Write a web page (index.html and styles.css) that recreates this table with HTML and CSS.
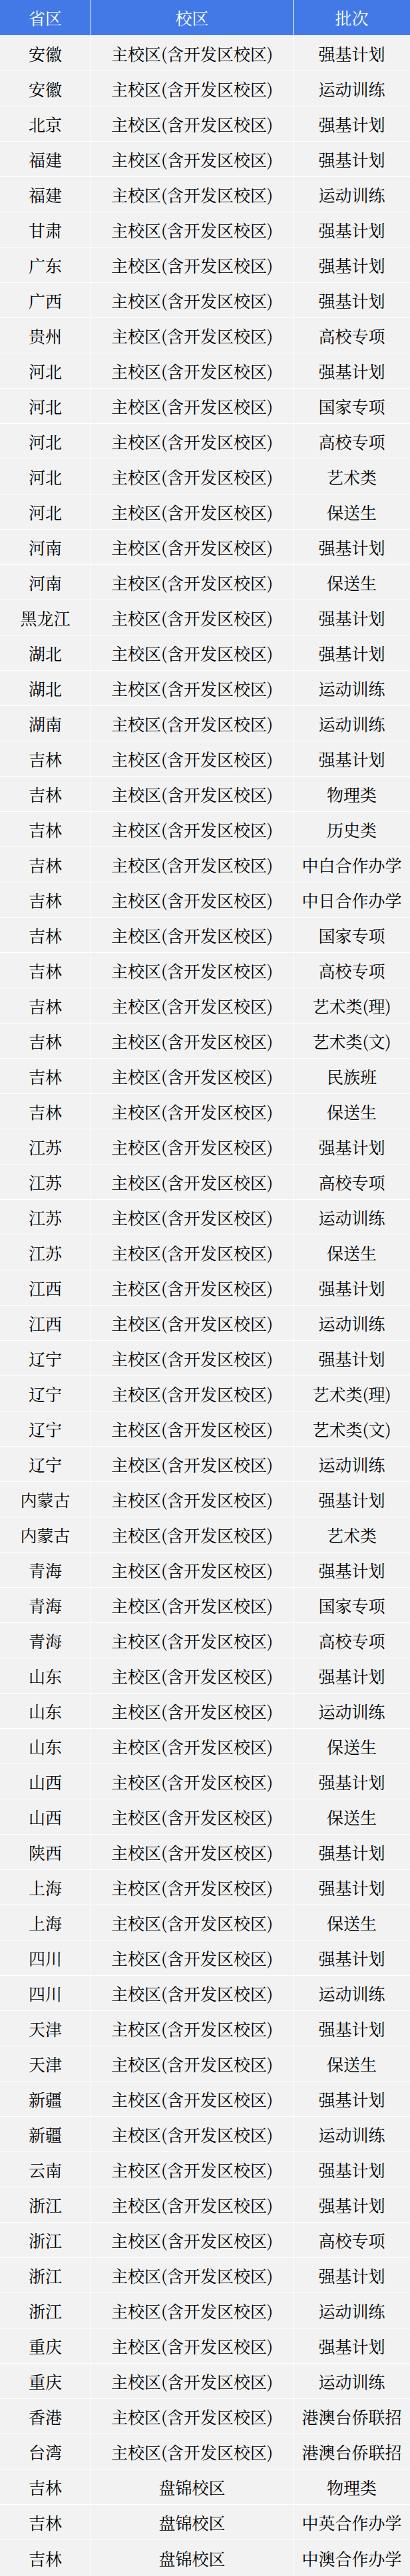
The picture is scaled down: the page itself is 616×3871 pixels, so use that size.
FILE: index.html
```html
<!DOCTYPE html>
<html lang="zh-CN">
<head>
<meta charset="utf-8">
<title>招生批次</title>
<link rel="stylesheet" href="styles.css">
</head>
<body>
<div class="table">
  <div class="row head"><div class="cell">省区</div><div class="cell">校区</div><div class="cell">批次</div></div>
  <div class="row"><div class="cell">安徽</div><div class="cell">主校区(含开发区校区)</div><div class="cell">强基计划</div></div>
  <div class="row"><div class="cell">安徽</div><div class="cell">主校区(含开发区校区)</div><div class="cell">运动训练</div></div>
  <div class="row"><div class="cell">北京</div><div class="cell">主校区(含开发区校区)</div><div class="cell">强基计划</div></div>
  <div class="row"><div class="cell">福建</div><div class="cell">主校区(含开发区校区)</div><div class="cell">强基计划</div></div>
  <div class="row"><div class="cell">福建</div><div class="cell">主校区(含开发区校区)</div><div class="cell">运动训练</div></div>
  <div class="row"><div class="cell">甘肃</div><div class="cell">主校区(含开发区校区)</div><div class="cell">强基计划</div></div>
  <div class="row"><div class="cell">广东</div><div class="cell">主校区(含开发区校区)</div><div class="cell">强基计划</div></div>
  <div class="row"><div class="cell">广西</div><div class="cell">主校区(含开发区校区)</div><div class="cell">强基计划</div></div>
  <div class="row"><div class="cell">贵州</div><div class="cell">主校区(含开发区校区)</div><div class="cell">高校专项</div></div>
  <div class="row"><div class="cell">河北</div><div class="cell">主校区(含开发区校区)</div><div class="cell">强基计划</div></div>
  <div class="row"><div class="cell">河北</div><div class="cell">主校区(含开发区校区)</div><div class="cell">国家专项</div></div>
  <div class="row"><div class="cell">河北</div><div class="cell">主校区(含开发区校区)</div><div class="cell">高校专项</div></div>
  <div class="row"><div class="cell">河北</div><div class="cell">主校区(含开发区校区)</div><div class="cell">艺术类</div></div>
  <div class="row"><div class="cell">河北</div><div class="cell">主校区(含开发区校区)</div><div class="cell">保送生</div></div>
  <div class="row"><div class="cell">河南</div><div class="cell">主校区(含开发区校区)</div><div class="cell">强基计划</div></div>
  <div class="row"><div class="cell">河南</div><div class="cell">主校区(含开发区校区)</div><div class="cell">保送生</div></div>
  <div class="row"><div class="cell">黑龙江</div><div class="cell">主校区(含开发区校区)</div><div class="cell">强基计划</div></div>
  <div class="row"><div class="cell">湖北</div><div class="cell">主校区(含开发区校区)</div><div class="cell">强基计划</div></div>
  <div class="row"><div class="cell">湖北</div><div class="cell">主校区(含开发区校区)</div><div class="cell">运动训练</div></div>
  <div class="row"><div class="cell">湖南</div><div class="cell">主校区(含开发区校区)</div><div class="cell">运动训练</div></div>
  <div class="row"><div class="cell">吉林</div><div class="cell">主校区(含开发区校区)</div><div class="cell">强基计划</div></div>
  <div class="row"><div class="cell">吉林</div><div class="cell">主校区(含开发区校区)</div><div class="cell">物理类</div></div>
  <div class="row"><div class="cell">吉林</div><div class="cell">主校区(含开发区校区)</div><div class="cell">历史类</div></div>
  <div class="row"><div class="cell">吉林</div><div class="cell">主校区(含开发区校区)</div><div class="cell">中白合作办学</div></div>
  <div class="row"><div class="cell">吉林</div><div class="cell">主校区(含开发区校区)</div><div class="cell">中日合作办学</div></div>
  <div class="row"><div class="cell">吉林</div><div class="cell">主校区(含开发区校区)</div><div class="cell">国家专项</div></div>
  <div class="row"><div class="cell">吉林</div><div class="cell">主校区(含开发区校区)</div><div class="cell">高校专项</div></div>
  <div class="row"><div class="cell">吉林</div><div class="cell">主校区(含开发区校区)</div><div class="cell">艺术类(理)</div></div>
  <div class="row"><div class="cell">吉林</div><div class="cell">主校区(含开发区校区)</div><div class="cell">艺术类(文)</div></div>
  <div class="row"><div class="cell">吉林</div><div class="cell">主校区(含开发区校区)</div><div class="cell">民族班</div></div>
  <div class="row"><div class="cell">吉林</div><div class="cell">主校区(含开发区校区)</div><div class="cell">保送生</div></div>
  <div class="row"><div class="cell">江苏</div><div class="cell">主校区(含开发区校区)</div><div class="cell">强基计划</div></div>
  <div class="row"><div class="cell">江苏</div><div class="cell">主校区(含开发区校区)</div><div class="cell">高校专项</div></div>
  <div class="row"><div class="cell">江苏</div><div class="cell">主校区(含开发区校区)</div><div class="cell">运动训练</div></div>
  <div class="row"><div class="cell">江苏</div><div class="cell">主校区(含开发区校区)</div><div class="cell">保送生</div></div>
  <div class="row"><div class="cell">江西</div><div class="cell">主校区(含开发区校区)</div><div class="cell">强基计划</div></div>
  <div class="row"><div class="cell">江西</div><div class="cell">主校区(含开发区校区)</div><div class="cell">运动训练</div></div>
  <div class="row"><div class="cell">辽宁</div><div class="cell">主校区(含开发区校区)</div><div class="cell">强基计划</div></div>
  <div class="row"><div class="cell">辽宁</div><div class="cell">主校区(含开发区校区)</div><div class="cell">艺术类(理)</div></div>
  <div class="row"><div class="cell">辽宁</div><div class="cell">主校区(含开发区校区)</div><div class="cell">艺术类(文)</div></div>
  <div class="row"><div class="cell">辽宁</div><div class="cell">主校区(含开发区校区)</div><div class="cell">运动训练</div></div>
  <div class="row"><div class="cell">内蒙古</div><div class="cell">主校区(含开发区校区)</div><div class="cell">强基计划</div></div>
  <div class="row"><div class="cell">内蒙古</div><div class="cell">主校区(含开发区校区)</div><div class="cell">艺术类</div></div>
  <div class="row"><div class="cell">青海</div><div class="cell">主校区(含开发区校区)</div><div class="cell">强基计划</div></div>
  <div class="row"><div class="cell">青海</div><div class="cell">主校区(含开发区校区)</div><div class="cell">国家专项</div></div>
  <div class="row"><div class="cell">青海</div><div class="cell">主校区(含开发区校区)</div><div class="cell">高校专项</div></div>
  <div class="row"><div class="cell">山东</div><div class="cell">主校区(含开发区校区)</div><div class="cell">强基计划</div></div>
  <div class="row"><div class="cell">山东</div><div class="cell">主校区(含开发区校区)</div><div class="cell">运动训练</div></div>
  <div class="row"><div class="cell">山东</div><div class="cell">主校区(含开发区校区)</div><div class="cell">保送生</div></div>
  <div class="row"><div class="cell">山西</div><div class="cell">主校区(含开发区校区)</div><div class="cell">强基计划</div></div>
  <div class="row"><div class="cell">山西</div><div class="cell">主校区(含开发区校区)</div><div class="cell">保送生</div></div>
  <div class="row"><div class="cell">陕西</div><div class="cell">主校区(含开发区校区)</div><div class="cell">强基计划</div></div>
  <div class="row"><div class="cell">上海</div><div class="cell">主校区(含开发区校区)</div><div class="cell">强基计划</div></div>
  <div class="row"><div class="cell">上海</div><div class="cell">主校区(含开发区校区)</div><div class="cell">保送生</div></div>
  <div class="row"><div class="cell">四川</div><div class="cell">主校区(含开发区校区)</div><div class="cell">强基计划</div></div>
  <div class="row"><div class="cell">四川</div><div class="cell">主校区(含开发区校区)</div><div class="cell">运动训练</div></div>
  <div class="row"><div class="cell">天津</div><div class="cell">主校区(含开发区校区)</div><div class="cell">强基计划</div></div>
  <div class="row"><div class="cell">天津</div><div class="cell">主校区(含开发区校区)</div><div class="cell">保送生</div></div>
  <div class="row"><div class="cell">新疆</div><div class="cell">主校区(含开发区校区)</div><div class="cell">强基计划</div></div>
  <div class="row"><div class="cell">新疆</div><div class="cell">主校区(含开发区校区)</div><div class="cell">运动训练</div></div>
  <div class="row"><div class="cell">云南</div><div class="cell">主校区(含开发区校区)</div><div class="cell">强基计划</div></div>
  <div class="row"><div class="cell">浙江</div><div class="cell">主校区(含开发区校区)</div><div class="cell">强基计划</div></div>
  <div class="row"><div class="cell">浙江</div><div class="cell">主校区(含开发区校区)</div><div class="cell">高校专项</div></div>
  <div class="row"><div class="cell">浙江</div><div class="cell">主校区(含开发区校区)</div><div class="cell">强基计划</div></div>
  <div class="row"><div class="cell">浙江</div><div class="cell">主校区(含开发区校区)</div><div class="cell">运动训练</div></div>
  <div class="row"><div class="cell">重庆</div><div class="cell">主校区(含开发区校区)</div><div class="cell">强基计划</div></div>
  <div class="row"><div class="cell">重庆</div><div class="cell">主校区(含开发区校区)</div><div class="cell">运动训练</div></div>
  <div class="row"><div class="cell">香港</div><div class="cell">主校区(含开发区校区)</div><div class="cell">港澳台侨联招</div></div>
  <div class="row"><div class="cell">台湾</div><div class="cell">主校区(含开发区校区)</div><div class="cell">港澳台侨联招</div></div>
  <div class="row"><div class="cell">吉林</div><div class="cell">盘锦校区</div><div class="cell">物理类</div></div>
  <div class="row"><div class="cell">吉林</div><div class="cell">盘锦校区</div><div class="cell">中英合作办学</div></div>
  <div class="row"><div class="cell">吉林</div><div class="cell">盘锦校区</div><div class="cell">中澳合作办学</div></div>
</div>
</body>
</html>
```

FILE: styles.css
```css
html, body {
  margin: 0;
  padding: 0;
  background: #ffffff;
}

.table {
  width: 616px;
  display: flex;
  flex-direction: column;
  gap: 1px;
  background: #ffffff;
  font-family: "Noto Serif CJK SC", "Noto Sans CJK SC", "Liberation Serif", serif;
  font-size: 25px;
  color: #000000;
}

.row {
  display: grid;
  grid-template-columns: 136px 303px 175px;
  column-gap: 1px;
  height: 52px;
}

.row:last-child {
  height: 54px;
}

.row.head {
  height: 53px;
}

.cell {
  display: flex;
  align-items: center;
  justify-content: center;
  background: #f2f2f2;
  white-space: nowrap;
  line-height: 1;
}

.head .cell {
  background: #4279e6;
  color: #ffffff;
}
```
